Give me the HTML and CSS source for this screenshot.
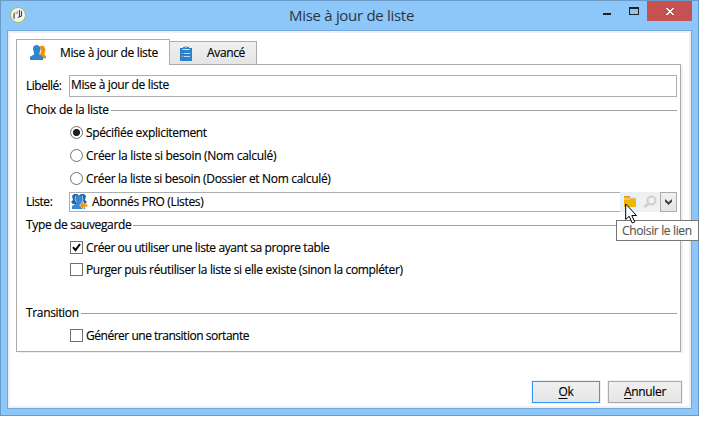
FILE: index.html
```html
<!DOCTYPE html>
<html lang="fr">
<head>
<meta charset="utf-8">
<title>Mise à jour de liste</title>
<link rel="stylesheet" href="styles.css">
</head>
<body>
<div class="window">
  <header class="titlebar">
    <svg class="app-icon" width="18" height="18" viewBox="0 0 18 18"><circle cx="9" cy="9" r="7.500" fill="#f4f4f2" stroke="#a5bf4c"/><path d="M4 8l2-2v7.500L4 12z" fill="#8c8c8c"/><path d="M6.500 6L9 4.500V8H6.500z" fill="#b4b4b4"/><path d="M10.500 4v6.500M12.500 5v5L9 11.500" fill="none" stroke="#444" stroke-width="1.100"/></svg>
    <h1 class="title">Mise à jour de liste</h1>
    <div class="controls">
      <svg width="60" height="20" viewBox="0 0 60 20" shape-rendering="crispEdges"><path d="M16 12h8v2h-8z" fill="#222"/><path fill-rule="evenodd" d="M42 6h10v8h-10zM43 8h8v5h-8z" fill="#222"/></svg>
      <span class="close"><svg width="8" height="7" viewBox="0 0 8 7" shape-rendering="crispEdges"><path d="M0 0h2v1h1v1h2V1h1V0h2v1H7v1H6v1H5v1h1v1h1v1h1v1H6V6H5V5H3v1H2v1H0V6h1V5h1V4h1V3H2V2H1V1H0z" fill="#fff"/></svg></span>
    </div>
  </header>
  <main class="client">
    <nav class="tabs">
      <div class="tab active">
        <svg width="17" height="16" viewBox="0 0 17 16"><path d="M10 1.200C13 0 15.500 1.500 15.500 5.500L14.500 8.500v1.200l1.500 1.300v2.500h-3.500L10 9.500l1-3z" fill="#f39200"/><path d="M3 4C3 1 4.500 0 6.500 0S10.500 1.500 10.500 4L9.500 8v1.500l3.500 2.200V15H0v-3.300l4-2.200V8z" fill="#2e86d1"/></svg>
        <span class="t">Mise à jour de liste</span>
      </div>
      <div class="tab other">
        <svg width="12" height="17" viewBox="0 0 12 17"><path d="M0 3h3V2h1.500a1.700 1.700 0 0 1 3 0H9v1h3v13H0z" fill="#2e7fca"/><path d="M2.500 4.500h7" stroke="#dceafa"/><path d="M5 2h2" stroke="#dceafa"/><path d="M2 8.500h1M4 8.500h6M2 11.500h1M4 11.500h6" stroke="#b7d7f5"/></svg>
        <span class="t">Avancé</span>
      </div>
    </nav>
    <section class="pane">
      <div class="row"><label class="label"><span class="t snug">Libellé:</span></label><div class="input"><span class="t">Mise à jour de liste</span></div></div>
      <div class="section first"><span class="t wide">Choix de la liste</span></div>
      <div class="option"><i class="radio on"></i><span class="t">Spécifiée explicitement</span></div>
      <div class="option"><i class="radio"></i><span class="t wide">Créer la liste si besoin (Nom calculé)</span></div>
      <div class="option"><i class="radio"></i><span class="t slightly-wide">Créer la liste si besoin (Dossier et Nom calculé)</span></div>
      <div class="row list-row"><label class="label"><span class="t snug">Liste:</span></label>
        <div class="picker">
          <svg class="people" width="17" height="17" viewBox="0 0 17 17"><path d="M1 3l2-2h3l2 1.500L10 1h3l2 2-1 4 2 2-2 2H2L0 9l2-2z" fill="#1c65a8"/><path d="M5 6c0-2.500 1.500-3.500 3-3.500S11 3.500 11 6l-1 4 4 3v3H1v-3l5-3z" fill="#3589d4"/><path d="M5 2.500L4 6l1.500 3.500M11 2.500L12 6l-1.500 3.500" fill="none" stroke="#acd3f3"/><path d="M8.500 12.300l4-3.800V11H16.500v3h-4v2.500z" fill="#f39200" stroke="#fff" stroke-width=".5"/></svg>
          <span class="t picked">Abonnés PRO (Listes)</span>
          <span class="tool folder"><svg width="20" height="18" viewBox="0 0 20 18"><path d="M4 3h6v1.500h6V14H4z" fill="#f7c36b"/><path d="M4 3h6v1.500H4z" fill="#f39200"/><path d="M4 7h5l1-1h6v8H4z" fill="#edb700"/></svg></span>
          <span class="tool search"><svg width="20" height="18" viewBox="0 0 20 18"><circle cx="11.500" cy="7.500" r="4" fill="none" stroke="#cfcfcf" stroke-width="2"/><path d="M8.500 10.500L4.500 14" stroke="#cfcfcf" stroke-width="2.500"/></svg></span>
          <span class="drop"><svg width="7" height="6" viewBox="0 0 7 6"><path d="M0 0l3.500 3L7 0v2.700L3.500 6 0 2.700z" fill="#444"/></svg></span>
        </div>
      </div>
      <div class="section second"><span class="t">Type de sauvegarde</span></div>
      <div class="option"><i class="check"><svg width="11" height="11" viewBox="0 0 11 11"><path d="M2 5.200l2.500 3L9 2" fill="none" stroke="#000" stroke-width="2"/></svg></i><span class="t slightly-snug">Créer ou utiliser une liste ayant sa propre table</span></div>
      <div class="option short"><i class="check"></i><span class="t low">Purger puis réutiliser la liste si elle existe (sinon la compléter)</span></div>
      <div class="section third"><span class="t">Transition</span></div>
      <div class="option"><i class="check"></i><span class="t snug">Générer une transition sortante</span></div>
    </section>
    <footer class="actions">
      <button class="btn ok"><span class="t"><u>O</u>k</span></button>
      <button class="btn cancel"><span class="t"><u>A</u>nnuler</span></button>
    </footer>
  </main>
</div>
<div class="tooltip"><span class="t">Choisir le lien</span></div>
<svg class="cursor" width="13" height="21" viewBox="0 0 13 21"><path d="M.7 1v15.500l3.500-3.300 3 6.800 2.600-1.200-3-6.300h4.700z" fill="#fff" stroke="#000"/></svg>
</body>
</html>
```
FILE: styles.css
```css
* { box-sizing: border-box; }
body {
  margin: 0;
  width: 715px;
  height: 430px;
  overflow: hidden;
  background: #fff;
  color: #000;
  font: 12px/16px "Open Sans", "Noto Sans", sans-serif;
}
svg { display: block; flex: none; }
.t { white-space: nowrap; letter-spacing: -0.35px; -webkit-text-stroke: 0.15px; }
.snug { letter-spacing: -0.48px; }
.slightly-snug { letter-spacing: -0.39px; }
.slightly-wide { letter-spacing: -0.32px; }
.wide { letter-spacing: -0.28px; }
.low { padding-top: 1px; }
.window {
  width: 699px;
  height: 416px;
  border: 1px solid #6a9bc8;
  background: #8dc7f9;
  padding: 0 6px 6px;
}
.titlebar { display: flex; height: 29px; }
.app-icon { margin: 5px 0 0 2px; }
.title {
  margin: 4px 0 0 262px;
  font-size: 15px;
  line-height: 20px;
  font-weight: 400;
  color: #2b3542;
  letter-spacing: -0.3px;
  white-space: nowrap;
}
.controls { display: flex; margin: 0 0 0 auto; }
.close {
  display: flex;
  width: 45px;
  height: 20px;
  padding: 1px 0 0 1px;
  align-items: center;
  justify-content: center;
  background: #c75050;
}
.client {
  width: 685px;
  height: 379px;
  border: 1px solid #74a8d9;
  background: #fff;
  box-shadow: inset 0 0 0 2px #f0f0f0;
  padding: 8px 8px 0;
}
.tabs { display: flex; height: 25px; align-items: flex-end; }
.tab { display: flex; border: 1px solid #acacac; border-bottom: 0; }
.active {
  width: 154px;
  height: 26px;
  margin-bottom: -1px;
  padding: 5px 0 0 13px;
  background: #fff;
  position: relative;
}
.active .t { margin: 0 0 0 13px; }
.other {
  width: 88px;
  height: 23px;
  margin-left: -1px;
  padding: 3px 0 0 10px;
  background: linear-gradient(#f0f0f0, #e5e5e5);
}
.other .t { margin: 0 0 0 15px; }
.pane {
  width: 665px;
  height: 288px;
  border: 1px solid #acacac;
  box-shadow: 2px 1px 0 #f0f0f0;
  padding: 10px 3px 0 9px;
}
.row { display: flex; align-items: center; }
.label { width: 43px; height: 17px; display: flex; }
.input {
  flex: 1;
  height: 22px;
  border: 1px solid #abadb3;
  padding: 1px;
}
.section {
  display: flex;
  height: 21px;
  align-items: center;
  gap: 2px;
}
.section::after { content: ""; flex: 1; height: 1px; background: #a0a0a0; }
.section .t { margin-top: -1px; }
.first { margin-top: 3px; }
.second { margin-top: 3px; }
.third { margin-top: 23px; }
.option {
  display: flex;
  height: 23px;
  align-items: center;
  gap: 3px;
  padding-left: 44px;
}
.option.short { height: 21px; }
.radio, .check {
  width: 13px;
  height: 13px;
  border: 1px solid #707070;
  background: #fff;
}
.radio { border-radius: 50%; }
.radio.on { background: radial-gradient(circle, #222 3.2px, #fff 3.9px); }
.list-row { margin-top: 2px; }
.picker {
  display: flex;
  flex: 1;
  height: 20px;
  border: 1px solid #abadb3;
  border-right: 0;
}
.people { margin: 0 4px 0 1px; }
.picked { padding-top: 1px; }
.tool { width: 20px; height: 20px; margin-top: -1px; padding-top: 1px; }
.folder { margin-left: auto; background: #e5f1fb; }
.search { background: #f0f0f0; }
.drop {
  display: flex;
  width: 17px;
  height: 20px;
  margin-top: -1px;
  border: 1px solid #acacac;
  background: linear-gradient(#f0f0f0, #e5e5e5);
  align-items: center;
  justify-content: center;
}
.actions { display: flex; justify-content: flex-end; gap: 8px; margin-top: 28px; }
.btn {
  height: 22px;
  margin: 1px 0 0;
  padding: 0;
  border: 1px solid #acacac;
  background: linear-gradient(#f0f0f0, #e5e5e5);
  box-shadow: 0 0 0 1px #f0f0f0;
  font: inherit;
  color: #000;
}
.ok { width: 68px; border-color: #3399ff; }
.cancel { width: 74px; margin-right: 1px; }
u { text-underline-offset: 2px; }
.tooltip {
  position: absolute;
  left: 616px;
  top: 220px;
  width: 83px;
  height: 21px;
  border: 1px solid #767676;
  background: #fff;
  color: #575757;
  padding: 2px 5px;
}
.cursor { position: absolute; left: 625px; top: 203px; }
```
